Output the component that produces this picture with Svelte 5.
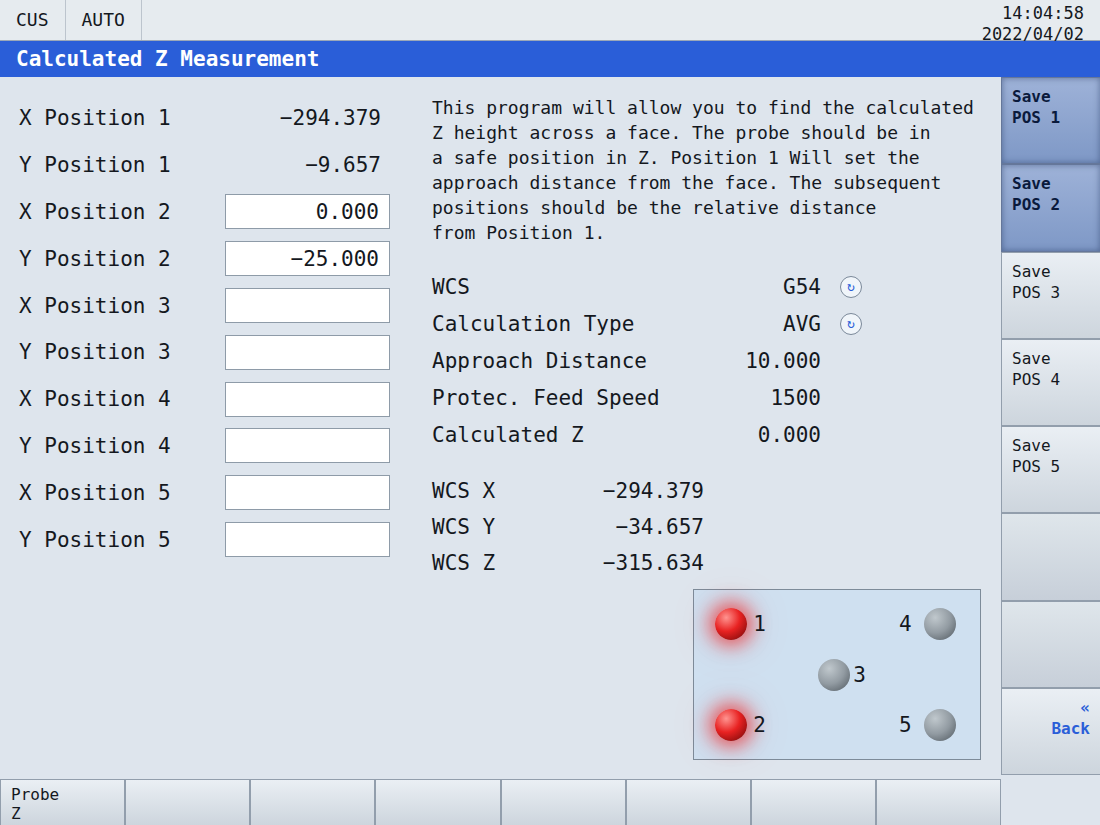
<script lang="ts">
  type Position = { id: string; label: string; value: string; editable: boolean };
  type Lamp = { id: number; x: number; y: number; side: 'left' | 'right' | 'near'; on: boolean };

  let positions = $state<Position[]>([
    { id: 'x1', label: 'X Position 1', value: '−294.379', editable: false },
    { id: 'y1', label: 'Y Position 1', value: '−9.657', editable: false },
    { id: 'x2', label: 'X Position 2', value: '0.000', editable: true },
    { id: 'y2', label: 'Y Position 2', value: '−25.000', editable: true },
    { id: 'x3', label: 'X Position 3', value: '', editable: true },
    { id: 'y3', label: 'Y Position 3', value: '', editable: true },
    { id: 'x4', label: 'X Position 4', value: '', editable: true },
    { id: 'y4', label: 'Y Position 4', value: '', editable: true },
    { id: 'x5', label: 'X Position 5', value: '', editable: true },
    { id: 'y5', label: 'Y Position 5', value: '', editable: true },
  ]);

  const help = [
    'This program will allow you to find the calculated',
    'Z height across a face. The probe should be in',
    'a safe position in Z. Position 1 Will set the',
    'approach distance from the face. The subsequent',
    'positions should be the relative distance',
    'from Position 1.',
  ].join('\n');

  const wcsOptions = ['G54', 'G55', 'G56', 'G57', 'G58', 'G59'];
  const calcOptions = ['AVG', 'MIN', 'MAX'];
  let wcs = $state('G54');
  let calcType = $state('AVG');

  let params = $derived([
    { label: 'WCS', value: wcs, cycle: () => (wcs = next(wcsOptions, wcs)) },
    { label: 'Calculation Type', value: calcType, cycle: () => (calcType = next(calcOptions, calcType)) },
    { label: 'Approach Distance', value: '10.000', cycle: null },
    { label: 'Protec. Feed Speed', value: '1500', cycle: null },
    { label: 'Calculated Z', value: '0.000', cycle: null },
  ]);

  const axes = [
    { label: 'WCS X', value: '−294.379' },
    { label: 'WCS Y', value: '−34.657' },
    { label: 'WCS Z', value: '−315.634' },
  ];

  let saved = $state([true, true, false, false, false]);

  // lamp centres in percent of the plate
  let lamps = $derived<Lamp[]>([
    { id: 1, x: 13, y: 20, side: 'right', on: saved[0] },
    { id: 2, x: 13, y: 80, side: 'right', on: saved[1] },
    { id: 3, x: 49, y: 50, side: 'near', on: saved[2] },
    { id: 4, x: 86, y: 20, side: 'left', on: saved[3] },
    { id: 5, x: 86, y: 80, side: 'left', on: saved[4] },
  ]);

  function next(list: string[], current: string) {
    return list[(list.indexOf(current) + 1) % list.length];
  }
</script>

<div class="screen">
  <header class="status">
    <span class="mode">CUS</span>
    <span class="mode">AUTO</span>
    <div class="clock">
      <time>14:04:58</time>
      <time>2022/04/02</time>
    </div>
  </header>

  <h1 class="title">Calculated Z Measurement</h1>

  <div class="body">
    <div class="work">
      <main class="content">
        <form class="positions">
          {#each positions as p}
            <div class="row">
              {#if p.editable}
                <label for={p.id}>{p.label}</label>
                <input id={p.id} type="text" bind:value={p.value} />
              {:else}
                <span>{p.label}</span>
                <output>{p.value}</output>
              {/if}
            </div>
          {/each}
        </form>

        <section class="details">
          <p class="help">{help}</p>

          <div class="params">
            {#each params as p}
              <div class="param">
                <span>{p.label}</span>
                <span class="value">{p.value}</span>
                {#if p.cycle}
                  <button class="cycle" type="button" aria-label="Change {p.label}" onclick={p.cycle}>↻</button>
                {/if}
              </div>
            {/each}
          </div>

          <div class="axes">
            {#each axes as a}
              <div class="axis">
                <span>{a.label}</span>
                <span>{a.value}</span>
              </div>
            {/each}
          </div>

          <div class="plate">
            {#each lamps as l}
              <div class="lamp {l.side}" class:on={l.on} style="left: {l.x}%; top: {l.y}%">
                <span class="number">{l.id}</span>
              </div>
            {/each}
          </div>
        </section>
      </main>

      <nav class="softkeys">
        <button type="button"><span>Probe</span><span>Z</span></button>
        {#each Array(7) as _}
          <button type="button" aria-label="Unused"></button>
        {/each}
      </nav>
    </div>

    <nav class="side">
      {#each saved as on, i}
        <button type="button" class:active={on} onclick={() => (saved[i] = !saved[i])}>
          <span>Save</span>
          <span>POS {i + 1}</span>
        </button>
      {/each}
      <button type="button" class="blank" aria-label="Unused"></button>
      <button type="button" class="blank" aria-label="Unused"></button>
      <button type="button" class="back">
        <span>«</span>
        <span>Back</span>
      </button>
    </nav>
  </div>
</div>

<style>
  :global(body) {
    background: #dee5ed;
  }

  .screen,
  .screen * {
    box-sizing: border-box;
  }

  .screen {
    display: flex;
    flex-direction: column;
    min-height: 100vh;
    color: #14181e;
    font-family: 'DejaVu Sans Mono', monospace;
    font-size: 21px;
  }

  button,
  input {
    margin: 0;
    color: inherit;
    font-family: inherit;
  }

  .status {
    display: flex;
    height: 41px;
    background: #e6ebef;
    border-bottom: 1px solid #9ba8b8;
    font-size: 18px;
  }

  .mode {
    padding: 0 16px;
    line-height: 40px;
    border-right: 1px solid #bcc4cd;
  }

  .clock {
    display: flex;
    flex-direction: column;
    margin-left: auto;
    padding: 3px 16px 0 0;
    font-size: 17px;
    line-height: 21px;
    text-align: right;
  }

  .title {
    margin: 0;
    padding: 0 16px;
    background: #2a5ed8;
    color: #fff;
    font-size: 21px;
    line-height: 36px;
  }

  .body {
    flex: 1;
    display: grid;
    grid-template-columns: 1fr 99px;
  }

  .work {
    display: flex;
    flex-direction: column;
  }

  .content {
    flex: 1;
    display: grid;
    grid-template-columns: 371px 1fr;
    gap: 42px;
    padding: 18px 20px 19px 19px;
  }

  .positions {
    align-self: start;
    display: grid;
    grid-auto-rows: 1fr;
    min-height: 468px;
  }

  .row {
    display: flex;
    align-items: center;
    justify-content: space-between;
  }

  .row output {
    padding-right: 9px;
  }

  .row input {
    width: 165px;
    height: 35px;
    padding: 0 10px;
    background: #fff;
    border: 1px solid #8e9ba8;
    border-radius: 0;
    font-size: 21px;
    text-align: right;
  }

  .details {
    display: flex;
    flex-direction: column;
  }

  .help {
    margin: 0 0 23px;
    font-size: 18px;
    line-height: 25px;
    white-space: pre-line;
  }

  .param {
    display: grid;
    grid-template-columns: 1fr auto 22px;
    column-gap: 19px;
    align-items: center;
    width: 430px;
    height: 37px;
  }

  .cycle {
    width: 22px;
    height: 22px;
    padding: 0;
    background: #f0f5fa;
    border: 1px solid #7a8899;
    border-radius: 50%;
    color: #2a5ed8;
    font-size: 13px;
    line-height: 20px;
  }

  .axes {
    width: 272px;
    margin-top: 20px;
    line-height: 36px;
  }

  .axis {
    display: flex;
    justify-content: space-between;
  }

  .plate {
    position: relative;
    align-self: flex-end;
    width: 288px;
    height: 171px;
    margin-top: auto;
    background: #cfe0f0;
    border: 1px solid #7d8b99;
  }

  .lamp {
    position: absolute;
    width: 32px;
    height: 32px;
    margin: -16px 0 0 -16px;
    border-radius: 50%;
    background: radial-gradient(circle at 35% 30%, #c0c8cd, #929ba2 50%, #4d565d);
  }

  .lamp.on {
    background: radial-gradient(circle at 35% 30%, #ff9490, #e82222 45%, #6c0505);
    box-shadow:
      0 0 18px 6px rgba(238, 40, 40, 0.7),
      0 0 50px 5px rgba(238, 40, 40, 0.12);
  }

  .number {
    position: absolute;
    top: 0;
    left: 38px;
    line-height: 32px;
  }

  .near .number {
    left: 35px;
  }

  .left .number {
    left: -25px;
  }

  .softkeys {
    display: grid;
    grid-template-columns: repeat(8, 1fr);
    height: 46px;
    border-top: 1px solid #929eac;
  }

  .softkeys button,
  .side button {
    display: flex;
    flex-direction: column;
    align-items: flex-start;
    justify-content: flex-start;
    padding: 8px 10px;
    background: linear-gradient(#eaeff4, #cdd5dd);
    border: 1px solid #929eac;
    border-radius: 0;
    font-size: 16px;
    line-height: 21px;
  }

  .softkeys button {
    padding: 5px 10px 0;
    border-width: 0 1px;
    line-height: 19px;
  }

  .side {
    display: grid;
    grid-auto-rows: 1fr;
    padding-bottom: 50px;
  }

  .side button {
    border-right: 0;
  }

  .side .active {
    background: linear-gradient(#9eb2d8, #7e98c6);
    border-color: #65779a;
    box-shadow: inset 0 0 6px rgba(30, 50, 90, 0.5);
    color: #0a1a3c;
    font-weight: 700;
  }

  .side .blank {
    background: linear-gradient(#dfe6eb, #c7cfd9);
  }

  .side .back {
    align-items: flex-end;
    color: #2a5ed8;
    font-weight: 700;
  }
</style>
